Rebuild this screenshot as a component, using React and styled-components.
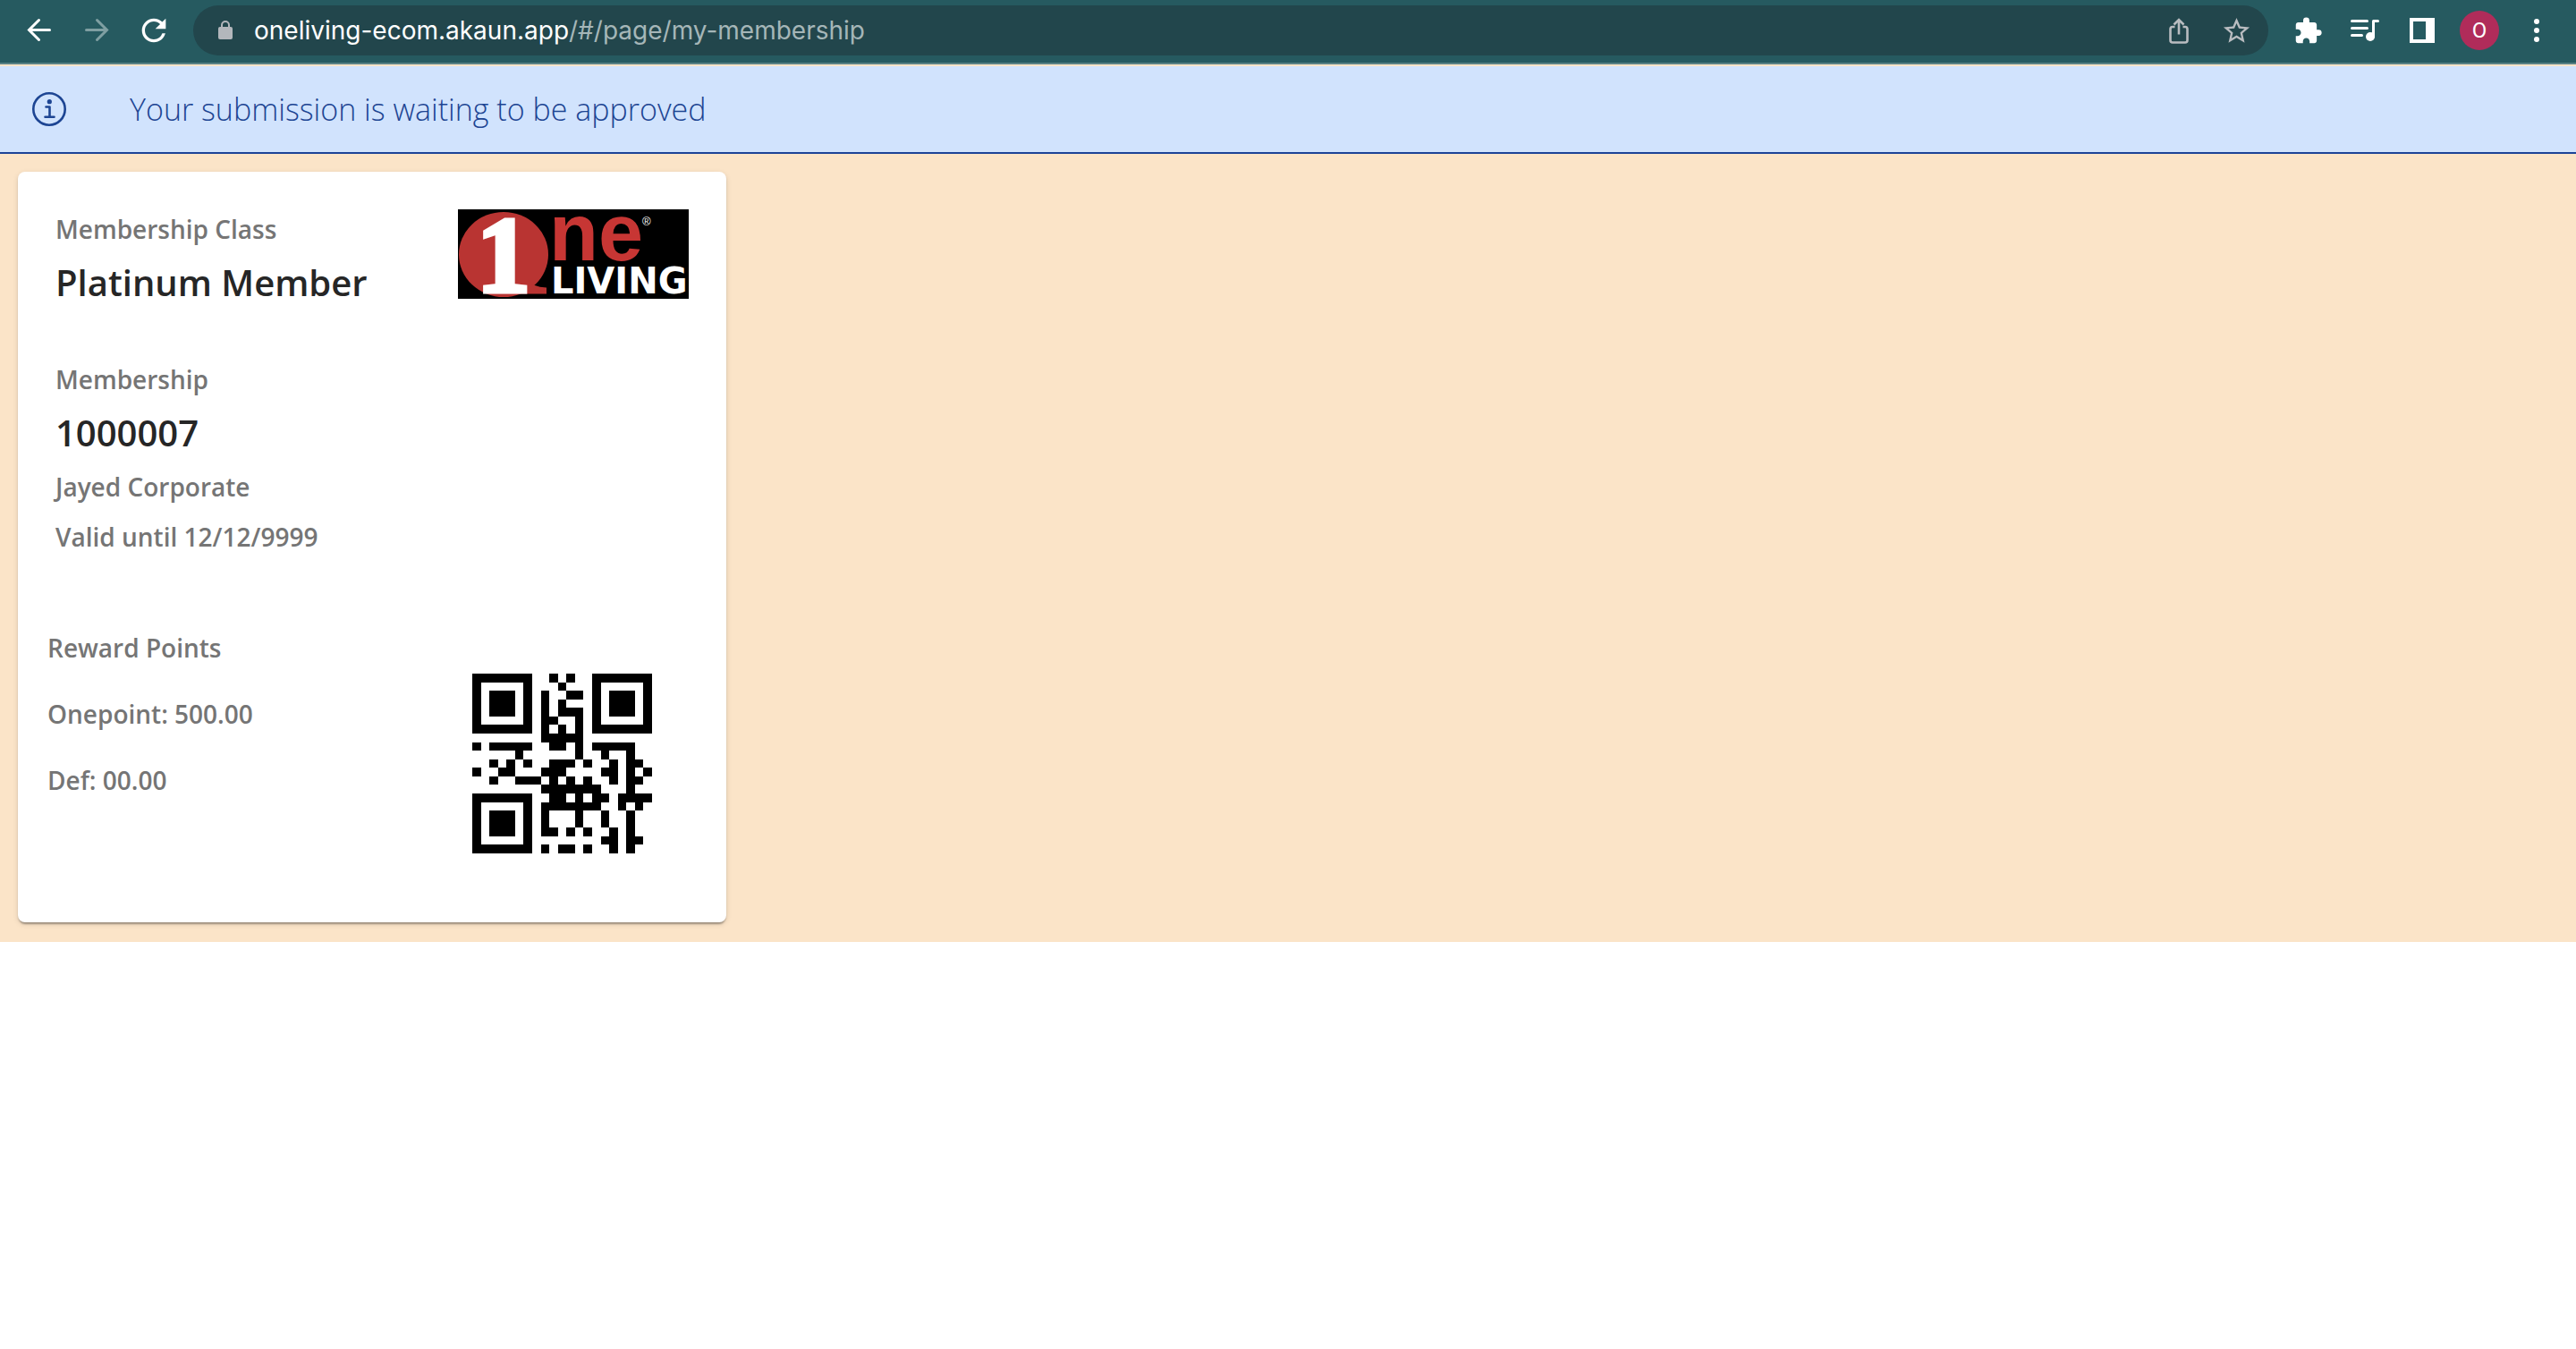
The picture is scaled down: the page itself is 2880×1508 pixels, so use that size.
import React from "react";
import styled, { createGlobalStyle } from "styled-components";

const GlobalStyle = createGlobalStyle`
  *, *::before, *::after { box-sizing: border-box; }
  body {
    margin: 0;
    background: #ffffff;
    font-family: "Open Sans", "Noto Sans", sans-serif;
  }
`;

const Toolbar = styled.header`
  display: flex;
  align-items: center;
  gap: 12px;
  height: 72px;
  padding: 0 12px 2px;
  background: #265a60;
  border-bottom: 2px solid #588184;
`;

const ButtonGroup = styled.nav`
  display: flex;
  align-items: center;
`;

const IconButton = styled.button`
  display: flex;
  align-items: center;
  justify-content: center;
  width: 64px;
  height: 56px;
  padding: 0;
  border: 0;
  background: none;
  color: ${(p) => p.$color || "#ffffff"};
`;

const AddressBar = styled.div`
  display: flex;
  flex: 1;
  align-items: center;
  height: 56px;
  padding: 0 4px 0 28px;
  border-radius: 28px;
  background: #22464c;
`;

const Address = styled.button`
  flex: 1;
  padding: 0 0 0 24px;
  border: 0;
  background: none;
  color: #a5b6b8;
  font: 400 28px/56px Inter, Roboto, sans-serif;
  text-align: left;
`;

const Domain = styled.span`
  color: #ffffff;
`;

const Avatar = styled.span`
  display: flex;
  align-items: center;
  justify-content: center;
  width: 44px;
  height: 44px;
  border-radius: 50%;
  background: #b02c5a;
  color: #ffffff;
  font: 400 24px/44px Roboto, sans-serif;
`;

const Banner = styled.div`
  display: flex;
  align-items: center;
  gap: 70px;
  height: 100px;
  padding: 0 35px;
  border-top: 2px solid #fbe4c8;
  border-bottom: 2px solid #1c4397;
  background: #d1e3fd;
  color: #1d4593;
`;

const BannerText = styled.p`
  margin: 0;
  font-size: 34px;
  font-weight: 300;
  line-height: 48px;
`;

const Page = styled.main`
  padding: 20px 20px 22px;
  background: #fbe4c8;
`;

const Card = styled.article`
  width: 792px;
  max-width: 100%;
  border-radius: 8px;
  background: #ffffff;
  box-shadow: 0 4px 2px -2px rgba(0, 0, 0, 0.2),
    0 2px 2px rgba(0, 0, 0, 0.14), 0 2px 6px rgba(0, 0, 0, 0.12);
`;

const Details = styled.section`
  display: flex;
  align-items: flex-start;
  justify-content: space-between;
  padding: 36px 42px 59px;
`;

const Groups = styled.div`
  display: flex;
  flex-direction: column;
  gap: 48px;
`;

const Label = styled.p`
  margin: 0;
  color: #757575;
  font-size: 28px;
  font-weight: 600;
  line-height: 56px;
`;

const Value = styled.h2`
  margin: 0;
  color: #262626;
  font-size: 40px;
  font-weight: 600;
  line-height: 64px;
`;

const LogoFrame = styled.div`
  display: flex;
  padding-top: 6px;
`;

const Rewards = styled.section`
  display: flex;
  align-items: flex-end;
  justify-content: space-between;
  padding: 0 83px 77px 33px;
`;

const PointsList = styled.ul`
  margin: 0;
  padding: 0 0 45px;
  list-style: none;
`;

const PointsItem = styled.li`
  color: #757575;
  font-size: 28px;
  font-weight: 600;
  line-height: 74px;
`;

const Icon = ({ size = 32, box = 32, children, ...rest }) => (
  <svg width={size} height={size} viewBox={`0 0 ${box} ${box}`} fill="none" aria-hidden="true" {...rest}>
    {children}
  </svg>
);

const line = { stroke: "currentColor", strokeWidth: 3, strokeLinecap: "round", strokeLinejoin: "round" };

const BackIcon = () => (
  <Icon><path {...line} strokeLinejoin="miter" d="M27.5 15.5H5M15.5 4.5L4.5 15.5l11 11" /></Icon>
);
const ForwardIcon = () => (
  <Icon><path {...line} strokeLinejoin="miter" d="M4.5 15.5H27M16.5 4.5l11 11-11 11" /></Icon>
);
const ReloadIcon = () => (
  <Icon size={40} box={24}>
    <path fill="currentColor" d="M17.65 6.35A7.958 7.958 0 0 0 12 4c-4.42 0-7.99 3.58-7.99 8s3.57 8 7.99 8c3.73 0 6.84-2.55 7.73-6h-2.08A5.99 5.99 0 0 1 12 18c-3.31 0-6-2.69-6-6s2.69-6 6-6c1.66 0 3.14.69 4.22 1.78L13 11h7V4l-2.35 2.35z" />
  </Icon>
);
const LockIcon = () => (
  <svg width="16" height="24" viewBox="0 0 16 24" fill="none" color="#b3b7bc" aria-hidden="true">
    <path d="M4 10V6a4 4 0 0 1 8 0v4" stroke="currentColor" strokeWidth="2" />
    <rect y="8" width="16" height="14" rx="2" fill="currentColor" />
  </svg>
);
const ShareIcon = () => (
  <Icon>
    <path stroke="currentColor" strokeWidth="2.6" d="M11.5 12H9a2.5 2.5 0 0 0-2.5 2.5V27A2.5 2.5 0 0 0 9 29.5h14a2.5 2.5 0 0 0 2.5-2.5V14.5A2.5 2.5 0 0 0 23 12h-2.5M16 4.5V20.5M10.5 9.5L16 4l5.5 5.5" />
  </Icon>
);
const StarIcon = () => (
  <Icon size={35} box={24}>
    <path fill="currentColor" d="m22 9.24-7.19-.62L12 2 9.19 8.63 2 9.24l5.46 4.73L5.82 21 12 17.27 18.18 21l-1.63-7.03L22 9.24zM12 15.4l-3.76 2.27 1-4.28-3.32-2.88 4.38-.38L12 6.1l1.71 4.04 4.38.38-3.32 2.88 1 4.28L12 15.4z" />
  </Icon>
);
const ExtensionIcon = () => (
  <Icon size={33} box={24}>
    <path fill="currentColor" d="M20.5 11H19V7c0-1.1-.9-2-2-2h-4V3.5a2.5 2.5 0 0 0-5 0V5H4c-1.1 0-1.99.9-1.99 2v3.8H3.5c1.49 0 2.7 1.21 2.7 2.7s-1.21 2.7-2.7 2.7H2V20c0 1.1.9 2 2 2h3.8v-1.5c0-1.49 1.21-2.7 2.7-2.7 1.49 0 2.7 1.21 2.7 2.7V22H17c1.1 0 2-.9 2-2v-4h1.5a2.5 2.5 0 0 0 0-5z" />
  </Icon>
);
const MediaIcon = () => (
  <Icon>
    <path {...line} d="M1.5 5.5h17M1.5 13.5h17M1.5 21.5h11" />
    <path {...line} d="M30.5 5.5h-5V23" />
    <circle cx="22" cy="23" r="5" fill="currentColor" />
  </Icon>
);
const PanelIcon = () => (
  <Icon size={28} box={28}>
    <path fill="currentColor" fillRule="evenodd" d="M0 0h28v28H0zM4 4v20h14V4z" />
  </Icon>
);
const MenuIcon = () => (
  <Icon>
    {[6, 16, 26].map((y) => <circle key={y} cx="16" cy={y} r="3" fill="currentColor" />)}
  </Icon>
);
const InfoIcon = () => (
  <Icon size={40} box={40}>
    <circle cx="20" cy="20" r="17.7" stroke="currentColor" strokeWidth="2.6" />
    <circle cx="20.3" cy="11.7" r="2.6" fill="currentColor" />
    <path stroke="currentColor" strokeWidth="2.6" strokeLinecap="round" strokeLinejoin="round" d="M16.5 17.5h4v11M15.5 28.8h10" />
  </Icon>
);

const LogoSvg = styled.svg`
  overflow: visible;
`;

const BrandLogo = () => (
  <LogoSvg width="258" height="100" viewBox="0 0 258 100" role="img" aria-label="One Living">
    <rect width="258" height="100" />
    <ellipse cx="51" cy="50.5" rx="50" ry="47.5" fill="#b93432" />
    <path d="M78 78q5 9 21 9.5v7H60z" fill="#b93432" />
    <text x="21" y="92" fill="#fff" stroke="#fff" strokeWidth="5" fontFamily="Liberation Serif, serif" fontWeight="700" fontSize="120">1</text>
    <text x="102" y="57" fill="#c73634" fontFamily="Liberation Sans, sans-serif" fontWeight="700" fontSize="90">ne</text>
    <text x="206" y="18" fill="#fff" fontFamily="Liberation Sans, sans-serif" fontSize="13">®</text>
    <text x="104" y="94" fill="#fff" fontFamily="DejaVu Sans, sans-serif" fontWeight="700" fontSize="40">LIVING</text>
  </LogoSvg>
);

const QR_ROWS = [
  "#######..#.#..#######",
  "#.....#...#...#.....#",
  "#.###.#.#..##.#.###.#",
  "#.###.#.#.#...#.###.#",
  "#.###.#.#.###.#.###.#",
  "#.....#.##..#.#.....#",
  "#######.#.#.#.#######",
  "........#####........",
  "#.#####..##.#.#####..",
  ".....#......#..#..#..",
  "..#.#.#..###.#..#.##.",
  "#..##...###....##.#.#",
  "..#..###.#.#.#..#.##.",
  "........#######...#..",
  "#######..##.#.##.####",
  "#.....#.#######..#.#.",
  "#.###.#.#...#..#..#..",
  "#.###.#.#...#..#..#..",
  "#.###.#.##.#.#..#.#..",
  "#.....#........##.##.",
  "#######.#.##.#..#.#..",
];

const QrCode = () => (
  <svg width="201" height="201" viewBox="0 0 21 21" shapeRendering="crispEdges" role="img" aria-label="Membership QR code">
    <path
      d={QR_ROWS.flatMap((row, y) =>
        [...row].map((cell, x) => (cell === "#" ? `M${x} ${y}h1v1h-1z` : ""))
      ).join("")}
    />
  </svg>
);

export default function App() {
  return (
    <>
      <GlobalStyle />
      <Toolbar>
        <ButtonGroup aria-label="History">
          <IconButton aria-label="Back"><BackIcon /></IconButton>
          <IconButton aria-label="Forward" $color="#7f9fa2"><ForwardIcon /></IconButton>
          <IconButton aria-label="Reload"><ReloadIcon /></IconButton>
        </ButtonGroup>
        <AddressBar>
          <LockIcon />
          <Address><Domain>oneliving-ecom.akaun.app</Domain>/#/page/my-membership</Address>
          <IconButton aria-label="Share" $color="#b9bcc0"><ShareIcon /></IconButton>
          <IconButton aria-label="Bookmark" $color="#b9bcc0"><StarIcon /></IconButton>
        </AddressBar>
        <ButtonGroup aria-label="Browser">
          <IconButton aria-label="Extensions"><ExtensionIcon /></IconButton>
          <IconButton aria-label="Media"><MediaIcon /></IconButton>
          <IconButton aria-label="Side panel"><PanelIcon /></IconButton>
          <IconButton aria-label="Profile"><Avatar>O</Avatar></IconButton>
          <IconButton aria-label="Menu"><MenuIcon /></IconButton>
        </ButtonGroup>
      </Toolbar>
      <Banner role="status">
        <InfoIcon />
        <BannerText>Your submission is waiting to be approved</BannerText>
      </Banner>
      <Page>
        <Card>
          <Details>
            <Groups>
              <div>
                <Label>Membership Class</Label>
                <Value>Platinum Member</Value>
              </div>
              <div>
                <Label>Membership</Label>
                <Value>1000007</Value>
                <Label>Jayed Corporate</Label>
                <Label>Valid until 12/12/9999</Label>
              </div>
            </Groups>
            <LogoFrame><BrandLogo /></LogoFrame>
          </Details>
          <Rewards>
            <PointsList>
              <PointsItem>Reward Points</PointsItem>
              <PointsItem>Onepoint: 500.00</PointsItem>
              <PointsItem>Def: 00.00</PointsItem>
            </PointsList>
            <QrCode />
          </Rewards>
        </Card>
      </Page>
    </>
  );
}
